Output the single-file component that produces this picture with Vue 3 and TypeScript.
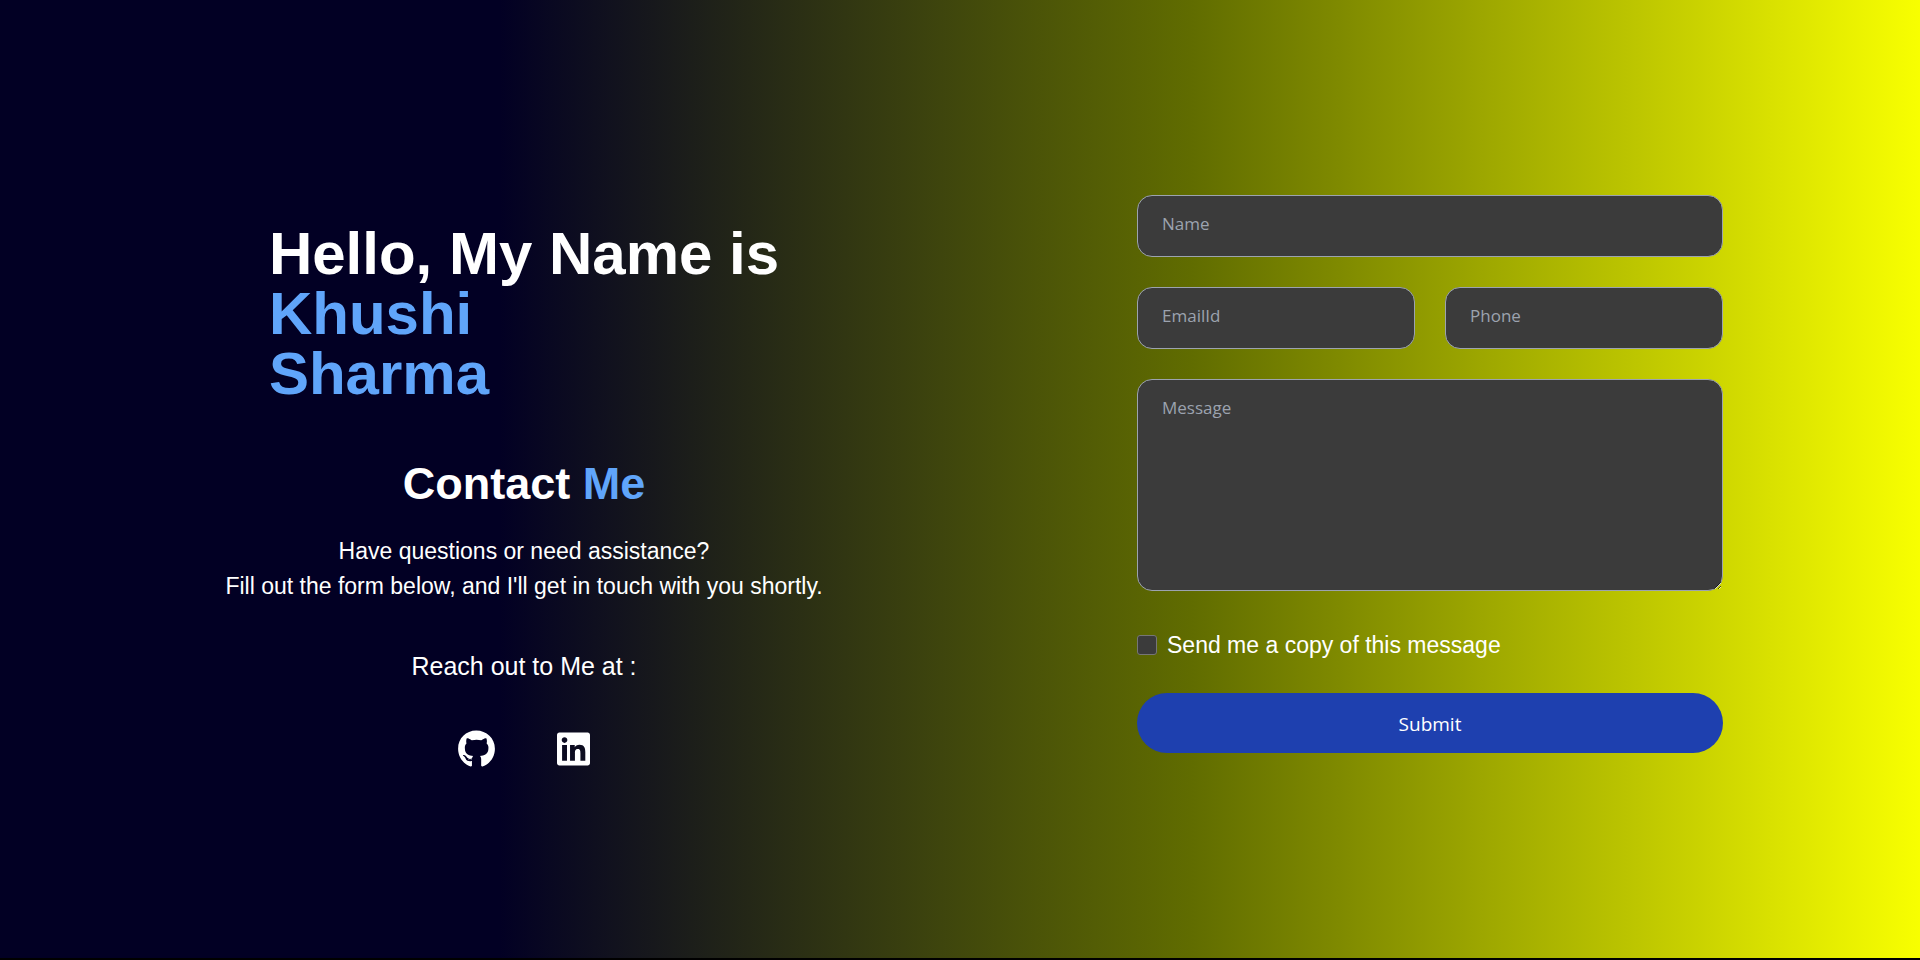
<script setup lang="ts">
import { reactive } from 'vue'

const form = reactive({ name: '', email: '', phone: '', message: '', copy: false })

function submit(): void {
  form.name = form.email = form.phone = form.message = ''
  form.copy = false
}
</script>

<template>
  <main class="contact">
    <section class="intro">
      <h1 class="greeting">
        Hello, My Name is<br />
        <span class="accent">Khushi<br />Sharma</span>
      </h1>
      <h2 class="title">Contact <span class="accent">Me</span></h2>
      <p class="lead">
        Have questions or need assistance?<br />
        Fill out the form below, and I'll get in touch with you shortly.
      </p>
      <p class="reach">Reach out to Me at :</p>
      <nav class="social">
        <a href="#github" aria-label="GitHub">
          <svg viewBox="0 0 496 512" width="37" height="38" fill="currentColor">
            <path d="M165.9 397.4c0 2-2.3 3.6-5.2 3.6-3.3.3-5.6-1.3-5.6-3.6 0-2 2.3-3.6 5.2-3.6 3-.3 5.6 1.3 5.6 3.6zm-31.1-4.5c-.7 2 1.3 4.3 4.3 4.9 2.6 1 5.6 0 6.2-2s-1.3-4.3-4.3-5.2c-2.6-.7-5.5.3-6.2 2.3zm44.2-1.7c-2.9.7-4.9 2.6-4.6 4.9.3 2 2.9 3.3 5.9 2.6 2.9-.7 4.9-2.6 4.6-4.6-.3-1.9-3-3.2-5.9-2.9zM244.8 8C106.1 8 0 113.3 0 252c0 110.9 69.8 205.8 169.5 239.2 12.8 2.3 17.3-5.6 17.3-12.1 0-6.2-.3-40.4-.3-61.4 0 0-70 15-84.7-29.8 0 0-11.4-29.1-27.8-36.6 0 0-22.9-15.7 1.6-15.4 0 0 24.9 2 38.6 25.8 21.9 38.6 58.6 27.5 72.9 20.9 2.3-16 8.8-27.1 16-33.7-55.9-6.2-112.3-14.3-112.3-110.5 0-27.5 7.6-41.3 23.6-58.9-2.6-6.5-11.1-33.3 2.6-67.9 20.9-6.5 69 27 69 27 20-5.6 41.5-8.5 62.8-8.5s42.8 2.9 62.8 8.5c0 0 48.1-33.6 69-27 13.7 34.7 5.2 61.4 2.6 67.9 16 17.7 25.8 31.5 25.8 58.9 0 96.5-58.9 104.2-114.8 110.5 9.2 7.9 17 22.9 17 46.4 0 33.7-.3 75.4-.3 83.6 0 6.5 4.6 14.4 17.3 12.1C428.2 457.8 496 362.9 496 252 496 113.3 383.5 8 244.8 8z" />
          </svg>
        </a>
        <a href="#linkedin" aria-label="LinkedIn">
          <svg viewBox="0 0 448 512" width="33" height="38" fill="currentColor">
            <path d="M416 32H31.9C14.3 32 0 46.5 0 64.3v383.4C0 465.5 14.3 480 31.9 480H416c17.6 0 32-14.5 32-32.3V64.3c0-17.8-14.4-32.3-32-32.3zM135.4 416H69V202.2h66.5V416zm-33.2-243c-21.3 0-38.5-17.3-38.5-38.5S80.9 96 102.2 96c21.2 0 38.5 17.3 38.5 38.5 0 21.3-17.2 38.5-38.5 38.5zm282.1 243h-66.4V312c0-24.8-.5-56.7-34.5-56.7-34.6 0-39.9 27-39.9 54.9V416h-66.4V202.2h63.7v29.2h.9c8.9-16.8 30.6-34.5 62.9-34.5 67.2 0 79.7 44.3 79.7 101.9V416z" />
          </svg>
        </a>
      </nav>
    </section>

    <form class="form" @submit.prevent="submit">
      <input v-model="form.name" class="field" type="text" placeholder="Name" aria-label="Name" />
      <div class="pair">
        <input v-model="form.email" class="field" type="email" placeholder="EmailId" aria-label="EmailId" />
        <input v-model="form.phone" class="field" type="tel" placeholder="Phone" aria-label="Phone" />
      </div>
      <textarea v-model="form.message" class="field message" placeholder="Message" aria-label="Message"></textarea>
      <label class="copy" for="copy">
        <input id="copy" v-model="form.copy" class="tick" type="checkbox" />
        Send me a copy of this message
      </label>
      <button class="submit" type="submit">Submit</button>
    </form>
  </main>
</template>

<style>
body {
  background: #000;
}
</style>

<style scoped>
.contact {
  box-sizing: border-box;
  min-height: calc(100vh - 2px);
  padding: 0 197px 10px;
  display: grid;
  grid-template-columns: minmax(0, 654fr) minmax(0, 586fr);
  column-gap: 286px;
  align-items: center;
  color: #fff;
  font-family: "Liberation Sans", Arial, sans-serif;
  background: linear-gradient(90deg, #020024 26%, #606c00 62%, #f8ff00 100%);
}

.intro {
  display: flex;
  flex-direction: column;
  align-items: center;
  padding-top: 44px;
  white-space: nowrap;
}

h1,
h2,
p {
  margin: 0;
}

.accent {
  color: #60a5fa;
}

.greeting {
  font-size: 60px;
  line-height: 60px;
}

.title {
  margin-top: 56px;
  font-size: 45px;
  line-height: 48px;
}

.lead {
  margin-top: 26px;
  font-size: 23px;
  line-height: 35px;
  text-align: center;
}

.reach {
  margin-top: 44px;
  font-size: 25px;
  line-height: 36px;
}

.social {
  display: flex;
  gap: 62px;
  margin-top: 46px;
}

.social a {
  display: flex;
  color: #fff;
}

.form {
  display: flex;
  flex-direction: column;
}

.field {
  box-sizing: border-box;
  width: 100%;
  height: 62px;
  padding: 13px 24px 19px;
  border: 1px solid #9ca3af;
  border-radius: 15px;
  background: #3b3b3b;
  color: #fff;
  font: 17px/28px "Open Sans", "Noto Sans", sans-serif;
}

.field::placeholder {
  color: #9ca3af;
  opacity: 1;
}

.pair {
  display: grid;
  grid-template-columns: 1fr 1fr;
  gap: 30px;
  margin: 30px 0;
}

.message {
  display: block;
  height: 212px;
  padding-top: 14px;
}

.copy {
  display: flex;
  align-items: center;
  gap: 10px;
  margin-top: 36px;
  font-size: 23px;
  line-height: 36px;
}

.tick {
  box-sizing: border-box;
  appearance: none;
  width: 20px;
  height: 20px;
  margin: 0;
  border: 1px solid #767676;
  border-radius: 3px;
  background: #3b3b3b;
}

.tick:checked {
  background: #1e40af;
}

.submit {
  height: 60px;
  margin-top: 30px;
  padding: 2px 24px 0;
  border: 0;
  border-radius: 30px;
  background: #1e40af;
  color: #fff;
  font: 19px/28px "Open Sans", "Noto Sans", sans-serif;
}
</style>
